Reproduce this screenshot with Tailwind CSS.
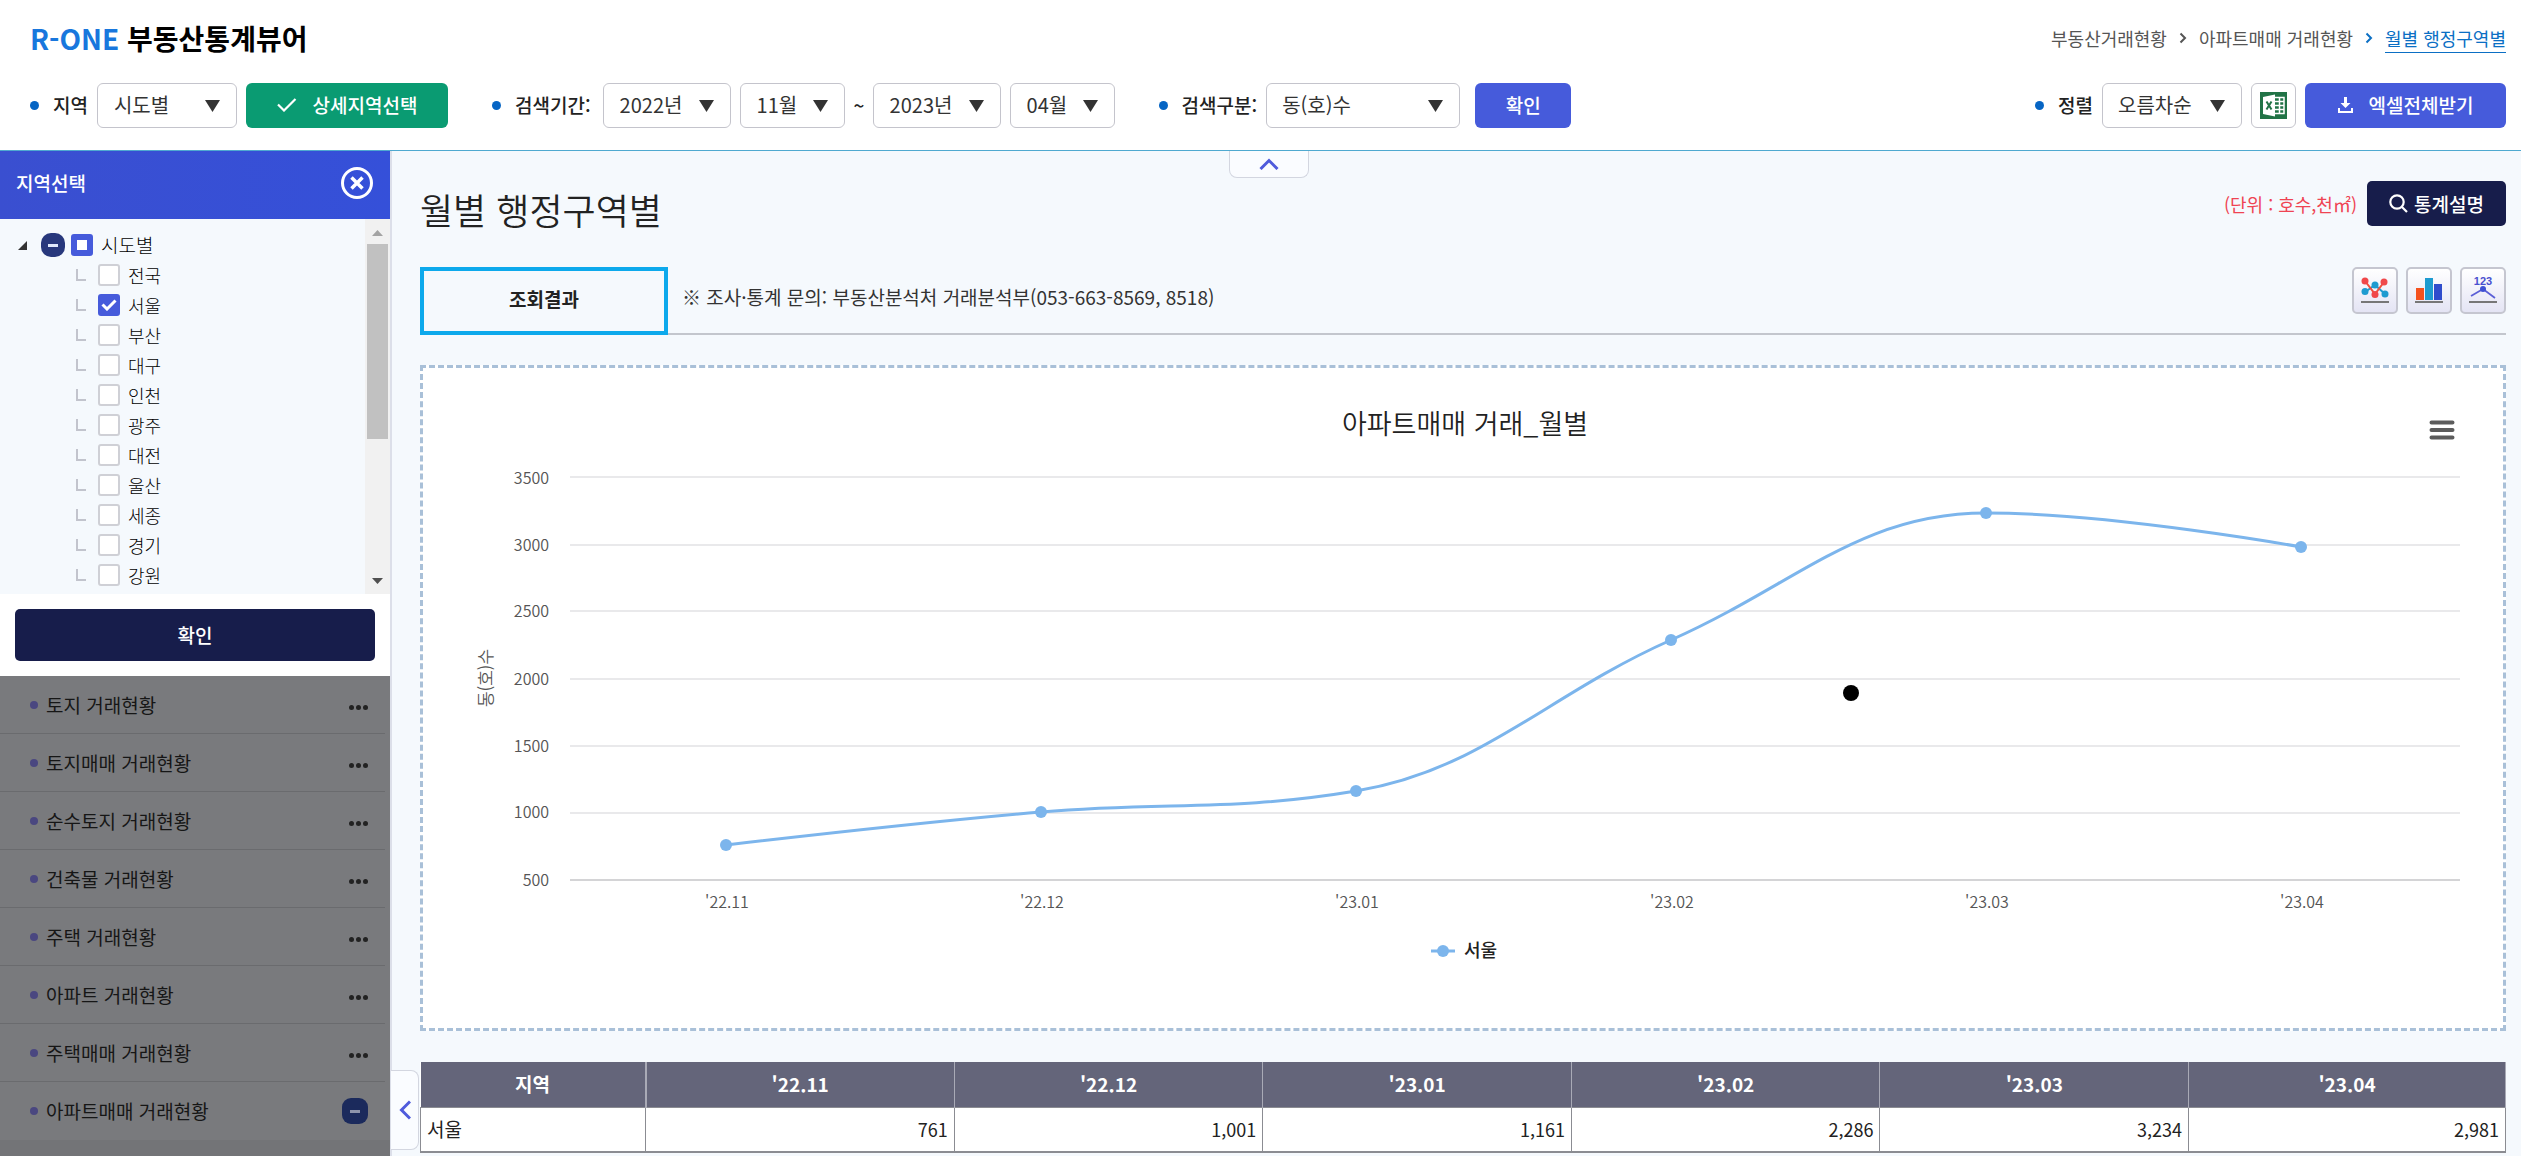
<!DOCTYPE html>
<html lang="ko">
<head>
<meta charset="utf-8">
<title>R-ONE 부동산통계뷰어</title>
<script src="https://cdn.jsdelivr.net/npm/@tailwindcss/browser@4"></script>
</head>
<body class="flex min-h-screen flex-col overflow-x-hidden bg-[#f5f9fd] font-['Noto_Sans_CJK_KR',sans-serif] text-[19px] leading-7 text-[#222]">

<header class="flex h-[151px] shrink-0 flex-col border-b border-[#4fa9d0] bg-white pr-[15px] pl-[30px]">
  <div class="flex h-[76px] items-center justify-between">
    <h1 class="text-[28px] font-bold text-black"><a href="#"><span class="text-[#1877dd]">R-ONE</span> 부동산통계뷰어</a></h1>
    <nav class="flex items-center text-[18px] text-[#555]" aria-label="현재 위치">
      <a href="#">부동산거래현황</a>
      <svg class="mx-3 h-3 w-2" viewBox="0 0 8 12" fill="none" stroke="#555" stroke-width="2"><path d="M1.500 1.500 6 6l-4.500 4.500"/></svg>
      <a href="#">아파트매매 거래현황</a>
      <svg class="mx-3 h-3 w-2" viewBox="0 0 8 12" fill="none" stroke="#0b6fc4" stroke-width="2"><path d="M1.500 1.500 6 6l-4.500 4.500"/></svg>
      <a href="#" class="border-b border-[#0b6fc4] text-[#0b6fc4]">월별 행정구역별</a>
    </nav>
  </div>
  <form class="flex h-[58px] items-center justify-between font-medium" onsubmit="return false">
    <div class="flex items-center gap-11">
      <div class="flex items-center gap-[9px]">
        <label for="region" class="flex items-center gap-[14px]"><span class="size-[9px] rounded-full bg-[#0665c4]"></span>지역</label>
        <div class="relative">
          <select id="region" class="h-[45px] w-[140px] appearance-none rounded-md border border-[#c4c4cc] bg-white pl-4 text-[20px] font-normal text-[#333]"><option>시도별</option></select>
          <svg class="pointer-events-none absolute top-[17px] right-[17px] h-3 w-[15px]" viewBox="0 0 15 12" fill="#333"><path d="M0 0h15L7.500 12z"/></svg>
        </div>
        <button class="flex h-[45px] w-[202px] items-center justify-center gap-4 rounded-md bg-[#0a9b72] text-white">
          <svg class="h-[14px] w-5" viewBox="0 0 20 14" fill="none" stroke="#fff" stroke-width="2.200"><path d="M1 6.500 7 12.500 18.500 1"/></svg>상세지역선택</button>
      </div>
      <div class="flex items-center gap-[9px]">
        <label for="y1" class="mr-[3px] flex items-center gap-[14px]"><span class="size-[9px] rounded-full bg-[#0665c4]"></span>검색기간:</label>
        <div class="relative">
          <select id="y1" class="h-[45px] w-[128px] appearance-none rounded-md border border-[#c4c4cc] bg-white pl-4 text-[20px] font-normal text-[#333]"><option>2022년</option></select>
          <svg class="pointer-events-none absolute top-[17px] right-[17px] h-3 w-[15px]" viewBox="0 0 15 12" fill="#333"><path d="M0 0h15L7.500 12z"/></svg>
        </div>
        <div class="relative">
          <select aria-label="시작월" class="h-[45px] w-[105px] appearance-none rounded-md border border-[#c4c4cc] bg-white pl-4 text-[20px] font-normal text-[#333]"><option>11월</option></select>
          <svg class="pointer-events-none absolute top-[17px] right-[17px] h-3 w-[15px]" viewBox="0 0 15 12" fill="#333"><path d="M0 0h15L7.500 12z"/></svg>
        </div>
        <span class="w-[10px] text-center">~</span>
        <div class="relative">
          <select aria-label="종료년" class="h-[45px] w-[128px] appearance-none rounded-md border border-[#c4c4cc] bg-white pl-4 text-[20px] font-normal text-[#333]"><option>2023년</option></select>
          <svg class="pointer-events-none absolute top-[17px] right-[17px] h-3 w-[15px]" viewBox="0 0 15 12" fill="#333"><path d="M0 0h15L7.500 12z"/></svg>
        </div>
        <div class="relative">
          <select aria-label="종료월" class="h-[45px] w-[105px] appearance-none rounded-md border border-[#c4c4cc] bg-white pl-4 text-[20px] font-normal text-[#333]"><option>04월</option></select>
          <svg class="pointer-events-none absolute top-[17px] right-[17px] h-3 w-[15px]" viewBox="0 0 15 12" fill="#333"><path d="M0 0h15L7.500 12z"/></svg>
        </div>
      </div>
      <div class="flex items-center gap-[9px]">
        <label for="kind" class="flex items-center gap-[14px]"><span class="size-[9px] rounded-full bg-[#0665c4]"></span>검색구분:</label>
        <div class="relative">
          <select id="kind" class="h-[45px] w-[194px] appearance-none rounded-md border border-[#c4c4cc] bg-white pl-[15px] text-[20px] font-normal text-[#333]"><option>동(호)수</option></select>
          <svg class="pointer-events-none absolute top-[17px] right-[17px] h-3 w-[15px]" viewBox="0 0 15 12" fill="#333"><path d="M0 0h15L7.500 12z"/></svg>
        </div>
        <button class="ml-1.5 h-[45px] w-24 rounded-md bg-[#465bdb] text-white">확인</button>
      </div>
    </div>
    <div class="flex items-center gap-[9px]">
      <label for="order" class="flex items-center gap-[14px]"><span class="size-[9px] rounded-full bg-[#0665c4]"></span>정렬</label>
      <div class="relative">
        <select id="order" class="h-[45px] w-[140px] appearance-none rounded-md border border-[#c4c4cc] bg-white pl-[15px] text-[20px] font-normal text-[#333]"><option>오름차순</option></select>
        <svg class="pointer-events-none absolute top-[17px] right-[17px] h-3 w-[15px]" viewBox="0 0 15 12" fill="#333"><path d="M0 0h15L7.500 12z"/></svg>
      </div>
      <button aria-label="엑셀" class="flex h-[45px] w-[45px] items-center justify-center rounded-md border border-[#c4c4cc] bg-white">
        <svg class="size-[27px]" viewBox="0 0 27 27"><path fill="#217346" d="M0 0h27v27H0z"/><path fill="#fff" d="M3 5 15 2.500v22L3 22z"/><path fill="none" stroke="#fff" stroke-width="1.500" d="M15 5.500h9v16h-9M15 9.500h9M15 13.500h9M15 17.500h9M19.500 5.500v16"/><path stroke="#217346" stroke-width="2" d="m6.500 9.500 5 8M11.500 9.500l-5 8"/></svg>
      </button>
      <button class="flex h-[45px] w-[201px] items-center justify-center gap-4 rounded-md bg-[#465bdb] text-white">
        <svg class="h-4 w-[15px]" viewBox="0 0 15 16" fill="#fff"><path d="M6 0h3v6h3.500l-5 5-5-5H6zM0 11h2v3h11v-3h2v5H0z"/></svg>엑셀전체받기</button>
    </div>
  </form>
</header>

<div class="flex flex-1">
  <aside class="flex w-[390px] shrink-0 flex-col bg-[#737477]">
    <div class="flex h-[68px] items-center justify-between bg-gradient-to-r from-[#3a4fd0] to-[#3550d9] pr-4 pb-1 pl-4 font-medium text-white">
      <h2>지역선택</h2>
      <button aria-label="닫기"><svg class="size-[34px]" viewBox="0 0 34 34" fill="none" stroke="#fff"><circle cx="17" cy="17" r="14.500" stroke-width="3"/><path stroke-width="3.500" d="m11.500 11.500 11 11M22.500 11.500l-11 11"/></svg></button>
    </div>
    <div class="flex h-[375px] overflow-hidden bg-[#f5f9fd]">
      <ul id="tree" class="flex-1 pt-[11px] text-[18px] font-light text-black">
        <li class="flex h-[30px] items-center pl-[18px]">
          <svg class="mr-[14px] size-[9px]" viewBox="0 0 9 9" fill="#333"><path d="M9 0v9H0z"/></svg>
          <button aria-label="접기" class="mr-[6px] flex size-6 items-center justify-center rounded-[10px] bg-[#28387c]"><span class="h-[3px] w-[10px] bg-[#dfe8fb]"></span></button>
          <input id="t0" type="checkbox" class="size-[22px] appearance-none rounded-[3px] border-[6px] border-[#465bdb] bg-white">
          <label for="t0" class="ml-2 text-[19px]">시도별</label>
        </li>
      </ul>
      <div class="flex w-[25px] flex-col items-center bg-[#f1f1f1] pt-[11px] pb-[10px]">
        <svg class="h-[6px] w-[11px] shrink-0" viewBox="0 0 11 6" fill="#a3a3a3"><path d="M0 6h11L5.500 0z"/></svg>
        <div class="mt-2 h-[195px] w-[21px] bg-[#c1c1c1]"></div>
        <svg class="mt-auto h-[6px] w-[11px] shrink-0" viewBox="0 0 11 6" fill="#505050"><path d="M0 0h11L5.500 6z"/></svg>
      </div>
    </div>
    <div class="bg-white px-[15px] pt-[15px] pb-[15px]">
      <button class="h-[52px] w-full rounded-[5px] bg-[#171d4b] font-medium text-white">확인</button>
    </div>
    <ul id="menu" class="bg-[#797a7d] pr-[5px] font-normal text-[#161616]"></ul>
  </aside>

  <main class="relative min-w-0 flex-1 border-l-2 border-[#dcdfe9] pr-[15px] pl-[28px]">
    <button aria-label="검색영역 접기" class="absolute top-0 left-[837px] flex h-[27px] w-20 items-center justify-center rounded-b-lg border border-t-0 border-[#d3d6e0] bg-[#fafcff]">
      <svg class="h-3 w-5" viewBox="0 0 20 12" fill="none" stroke="#4f5bdc" stroke-width="3"><path d="m1.500 11 8.500-8.500 8.500 8.500"/></svg>
    </button>
    <button aria-label="메뉴 접기" class="absolute top-[919px] -left-px flex h-20 w-7 items-center justify-center rounded-r-lg border border-l-0 border-[#d3d6e0] bg-[#fafcff]">
      <svg class="h-5 w-3" viewBox="0 0 12 20" fill="none" stroke="#4f5bdc" stroke-width="3"><path d="M11 1.500 2.500 10l8.500 8.500"/></svg>
    </button>

    <div class="flex items-start justify-between pt-[30px]">
      <h2 class="pt-1.5 text-[36px] leading-[44px] font-[350] text-[#222]">월별 행정구역별</h2>
      <div class="flex items-center gap-[10px]">
        <span class="text-[18px] text-[#ef4453]">(단위 : 호수,천㎡)</span>
        <button class="flex h-[45px] w-[139px] items-center justify-center gap-1.5 rounded-[5px] bg-[#171d4b] font-medium text-white">
          <svg class="size-[19px]" viewBox="0 0 19 19" fill="none" stroke="#fff" stroke-width="2.200"><circle cx="8" cy="8" r="6.700"/><path d="m13 13 5 5"/></svg>통계설명</button>
      </div>
    </div>

    <div class="mt-9 flex h-[68px] items-start border-b-2 border-[#c3c6cd]">
      <button class="h-[68px] w-[248px] shrink-0 border-4 border-[#0da9ec] bg-[#f5f9fd] pb-1 font-bold">조회결과</button>
      <p class="ml-[14px] pt-4 text-[19px] text-[#333]">※ 조사·통계 문의: 부동산분석처 거래분석부(053-663-8569, 8518)</p>
      <div class="ml-auto flex gap-2">
        <button aria-label="꺾은선 차트" class="flex h-[47px] w-[46px] items-center justify-center rounded-[5px] border-2 border-[#c5c6d0] bg-gradient-to-b from-white to-[#e4e4f4]">
          <svg class="h-[27px] w-7" viewBox="0 0 28 27"><g fill="none" stroke-width="2"><path stroke="#1e9bd0" d="m4 15 10-7 10 9"/><path stroke="#f0503c" d="m4 4 10 13L23 5"/></g><g fill="#1e9bd0"><circle cx="4" cy="14.500" r="3.500"/><circle cx="14" cy="8" r="3.500"/><circle cx="24" cy="17" r="3.500"/></g><g fill="#f0484a"><circle cx="4" cy="4" r="3.500"/><circle cx="14" cy="17.500" r="3.500"/><circle cx="23" cy="5" r="3.500"/></g><path fill="#777" d="M0 24h28v2H0z"/></svg></button>
        <button aria-label="막대 차트" class="flex h-[47px] w-[46px] items-center justify-center rounded-[5px] border-2 border-[#c5c6d0] bg-gradient-to-b from-white to-[#e4e4f4]">
          <svg class="h-[27px] w-7" viewBox="0 0 28 27"><path fill="#f4511e" d="M1 11h8v12H1z"/><path fill="#1e9bd0" d="M10 1h8v22h-8z"/><path fill="#2f4ccc" d="M19 7h8v16h-8z"/><path fill="#777" d="M0 24h28v2H0z"/></svg></button>
        <button aria-label="값 표시" class="flex h-[47px] w-[46px] items-center justify-center rounded-[5px] border-2 border-[#c5c6d0] bg-gradient-to-b from-white to-[#e4e4f4]">
          <svg class="h-[31px] w-7" viewBox="0 0 28 31"><text x="14" y="10" text-anchor="middle" font-family="Liberation Sans" font-size="11" font-weight="700" fill="#4a50cf">123</text><path fill="none" stroke="#5b5fd6" stroke-width="1.800" d="M2 21 14 14l12 9"/><circle cx="14" cy="14" r="3" fill="#3f51d3"/><path fill="#777" d="M0 26h28v2H0z"/></svg></button>
      </div>
    </div>

    <section class="relative mt-[30px] border-3 border-dashed border-[#a9c0d8] bg-white">
      <svg class="block h-auto w-full" viewBox="0 0 2080 660" role="img" aria-label="아파트매매 거래_월별" font-family="Noto Sans CJK KR, sans-serif">
        <text x="1042" y="66" text-anchor="middle" font-size="27" font-weight="350" fill="#222">아파트매매 거래_월별</text>
        <path fill="none" stroke="#e9e9eb" stroke-width="2" d="M147 109h1890M147 177h1890M147 243h1890M147 311h1890M147 378h1890M147 445h1890"/>
        <path stroke="#d4d4d6" stroke-width="2" d="M147 512h1890"/>
        <g font-size="16" font-weight="350" fill="#555" text-anchor="end">
          <text x="126" y="116">3500</text><text x="126" y="183">3000</text><text x="126" y="249">2500</text><text x="126" y="317">2000</text><text x="126" y="384">1500</text><text x="126" y="450">1000</text><text x="126" y="518">500</text>
        </g>
        <g font-size="16" font-weight="350" fill="#555" text-anchor="middle">
          <text x="304" y="540">'22.11</text><text x="619" y="540">'22.12</text><text x="934" y="540">'23.01</text><text x="1249" y="540">'23.02</text><text x="1564" y="540">'23.03</text><text x="1879" y="540">'23.04</text>
        </g>
        <text transform="translate(69 310) rotate(-90)" text-anchor="middle" font-size="17" font-weight="350" fill="#555">동(호)수</text>
        <path fill="none" stroke="#7cb5ec" stroke-width="3" stroke-linejoin="round" d="M303 477C303 477 492 455 618 444S807 444 933 423C1059 402 1122 328 1248 272S1437 145 1563 145S1878 179 1878 179"/>
        <g fill="#7cb5ec"><circle cx="303" cy="477" r="6"/><circle cx="618" cy="444" r="6"/><circle cx="933" cy="423" r="6"/><circle cx="1248" cy="272" r="6"/><circle cx="1563" cy="145" r="6"/><circle cx="1878" cy="179" r="6"/><circle cx="1020" cy="583" r="6"/></g>
        <path stroke="#7cb5ec" stroke-width="3" d="M1008 583h24"/>
        <text x="1041" y="589" font-size="18" font-weight="500" fill="#222">서울</text>
        <circle cx="1428" cy="325" r="8" fill="#000"/>
      </svg>
      <button aria-label="차트 메뉴" class="absolute top-[52px] right-[48px]"><svg class="h-5 w-[26px]" viewBox="0 0 26 20" stroke="#5c5c5c" stroke-width="4" stroke-linecap="round"><path d="M2.500 2.500h21M2.500 10h21M2.500 17.500h21"/></svg></button>
    </section>

    <table class="mt-[31px] w-full table-fixed border-collapse border-b-2 border-[#8b8c92] bg-white">
      <colgroup><col class="w-[10.8%]"><col class="w-[14.8%]"><col class="w-[14.8%]"><col class="w-[14.8%]"><col class="w-[14.8%]"><col class="w-[14.8%]"><col></colgroup>
      <thead><tr class="h-[45px] bg-[#64657a] font-bold text-white" id="th"><th scope="col" class="border-r-2 border-[#a9aab6]">지역</th></tr></thead>
      <tbody><tr class="h-[45px] text-[18px]" id="td"><th scope="row" class="border border-[#8b8c92] px-1.5 text-left text-[19px] font-normal">서울</th></tr></tbody>
    </table>
  </main>
</div>

<script>
const regions = ['전국','서울','부산','대구','인천','광주','대전','울산','세종','경기','강원'];
const row = (id, checked, label) => `
  <li class="flex h-[30px] items-center pl-[76px]">
    <span class="mr-3 h-3 w-[10px] border-b-2 border-l-2 border-[#c2c4cd]"></span>
    <span class="relative flex"><input id="${id}" type="checkbox" ${checked ? 'checked' : ''} aria-label="${label || '충북'}" class="size-[22px] appearance-none rounded-[3px] border-2 border-[#cfd0d6] bg-white checked:border-[#465bdb] checked:bg-[#465bdb]">
    ${checked ? '<svg class="pointer-events-none absolute top-[5px] left-[3px] h-3 w-4" viewBox="0 0 16 12" fill="none" stroke="#fff" stroke-width="3"><path d="m1.500 5.500 4.500 4.500L14.500 1.500"/></svg>' : ''}</span>
    <label for="${id}" class="ml-2">${label}</label>
  </li>`;
document.getElementById('tree').insertAdjacentHTML('beforeend',
  regions.map((name, i) => row('r' + i, i === 1, name)).join('') + row('r11', false, ''));

const menus = ['토지 거래현황','토지매매 거래현황','순수토지 거래현황','건축물 거래현황','주택 거래현황','아파트 거래현황','주택매매 거래현황','아파트매매 거래현황'];
document.getElementById('menu').innerHTML = menus.map((name, i) => {
  const open = i === menus.length - 1;
  return `<li class="flex h-[58px] items-center justify-between pr-[17px] pl-[30px] ${open ? '' : 'border-b border-[#6a6b6e]'}">
    <a href="#" class="flex items-center gap-2"><span class="size-2 rounded-full bg-[#4a4780]"></span>${name}</a>
    ${open ? '<button aria-label="접기" class="flex size-[26px] items-center justify-center rounded-[9px] bg-[#1b2a5c]"><span class="h-[3px] w-[10px] bg-[#8d94ab]"></span></button>'
           : '<button aria-label="펼치기" class="mt-1.5 flex gap-0.5"><span class="size-[5px] rounded-full bg-[#222]"></span><span class="size-[5px] rounded-full bg-[#222]"></span><span class="size-[5px] rounded-full bg-[#222]"></span></button>'}
  </li>`;
}).join('');

const data = [["'22.11","761"],["'22.12","1,001"],["'23.01","1,161"],["'23.02","2,286"],["'23.03","3,234"],["'23.04","2,981"]];
document.getElementById('th').insertAdjacentHTML('beforeend', data.map(d => `<th scope="col" class="border-r border-[#a9aab6]">${d[0]}</th>`).join(''));
document.getElementById('td').insertAdjacentHTML('beforeend', data.map(d => `<td class="border border-[#8b8c92] px-1.5 text-right">${d[1]}</td>`).join(''));
</script>
</body>
</html>
